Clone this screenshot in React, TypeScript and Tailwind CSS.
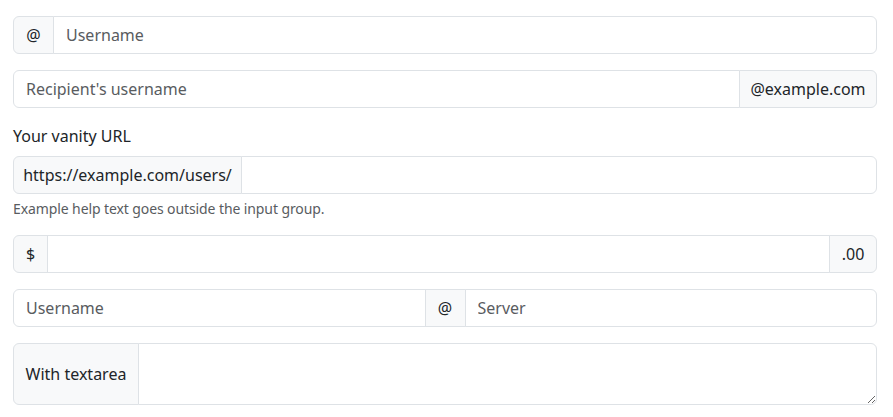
export default function App() {
    const font = { fontFamily: '"Noto Sans", "Open Sans", sans-serif' };
    const addon = 'flex items-center justify-center shrink-0 border border-[#dee2e6] bg-[#f8f9fa] text-base text-[#212529]';
    const field = 'min-w-0 flex-1 border border-[#dee2e6] bg-white px-3 text-base text-[#212529] placeholder:text-[#595c5f] outline-none';

    return (
        <div className="min-h-screen bg-white pt-4 pl-[13px] pr-4 text-[#212529]" style={font}>
            {/* @ + Username */}
            <div className="mb-4 flex h-[38px]">
                <span className={`${addon} w-[41px] rounded-l-md`}>@</span>
                <input className={`${field} -ml-px rounded-r-md`} placeholder="Username" />
            </div>

            {/* Recipient + domain */}
            <div className="mb-4 flex h-[38px]">
                <input className={`${field} rounded-l-md`} placeholder="Recipient's username" />
                <span className={`${addon} -ml-px w-[138px] rounded-r-md`}>@example.com</span>
            </div>

            <label className="mb-2 block text-base leading-6">Your vanity URL</label>
            <div className="flex h-[38px]">
                <span className={`${addon} w-[229px] rounded-l-md`}>https://example.com/users/</span>
                <input className={`${field} -ml-px rounded-r-md`} />
            </div>
            <div className="mt-1 mb-4 text-sm leading-[21px] tracking-[-0.1px] text-[#595c5f]">
                Example help text goes outside the input group.
            </div>

            {/* Amount */}
            <div className="mb-4 flex h-[38px]">
                <span className={`${addon} w-[35px] rounded-l-md`}>$</span>
                <input className={`${field} -ml-px`} />
                <span className={`${addon} -ml-px w-[48px] rounded-r-md`}>.00</span>
            </div>

            {/* Username @ Server */}
            <div className="mb-4 flex h-[38px]">
                <input className={`${field} rounded-l-md`} placeholder="Username" />
                <span className={`${addon} -ml-px w-[41px]`}>@</span>
                <input className={`${field} -ml-px rounded-r-md`} placeholder="Server" />
            </div>

            {/* Textarea */}
            <div className="flex h-[62px]">
                <span className={`${addon} w-[126px] rounded-l-md`}>With textarea</span>
                <textarea className={`${field} -ml-px rounded-r-md py-1.5`} />
            </div>
        </div>
    );
}
